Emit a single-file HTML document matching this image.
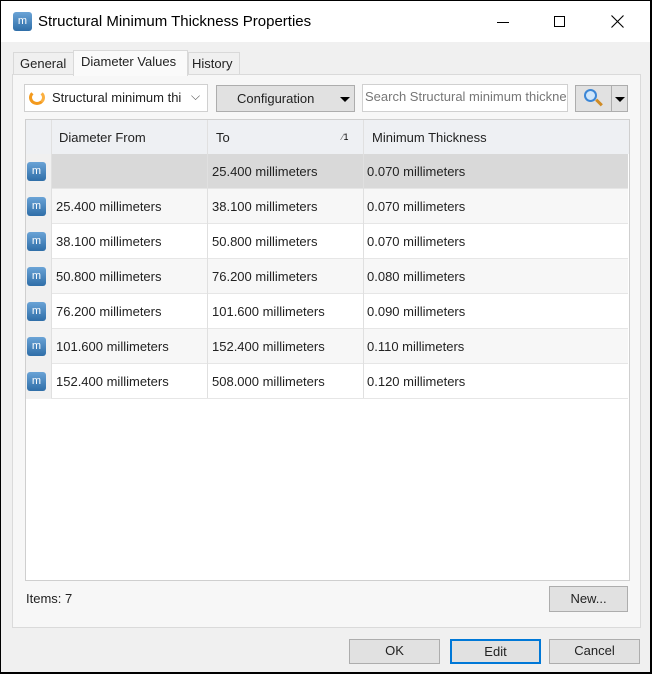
<!DOCTYPE html>
<html><head><style>
*{box-sizing:border-box;margin:0;padding:0}
body{width:652px;height:674px;background:#000;font-family:"Liberation Sans",sans-serif;font-size:13px;color:#222;position:relative;overflow:hidden}
.win{position:absolute;left:1px;top:1px;width:649px;height:671px;background:#f0f0f0}
.title{position:absolute;left:0;top:0;width:649px;height:41px;background:#fff}
.abs{position:absolute}
.mi{position:absolute;width:19px;height:19px;border-radius:3px;background:linear-gradient(#6aa3d6,#2f6ea8);color:#fff;font-size:11px;text-align:center;line-height:19px}
.btn{position:absolute;background:#e1e1e1;border:1px solid #adadad;text-align:center;font-size:13px;line-height:22px}
.row{position:absolute;left:25px;width:602px;height:35px;border-bottom:1px solid #e6e6e6}
.row span{position:absolute;top:10px}
.vl{position:absolute;top:119px;width:1px;height:278px;background:#e0e0e0}
</style></head><body>
<div class="win">
<div class="title">
 <div class="mi" style="left:12px;top:11px">m</div>
 <div class="abs" style="left:37px;top:12px;font-size:15px;color:#000">Structural Minimum Thickness Properties</div>
 <div class="abs" style="left:496px;top:21px;width:12px;height:1px;background:#000"></div>
 <div class="abs" style="left:553px;top:15px;width:11px;height:11px;border:1px solid #000"></div>
 <svg class="abs" style="left:610px;top:14px" width="13" height="13"><path d="M0.5 0.5L12.5 12.5M12.5 0.5L0.5 12.5" stroke="#000" stroke-width="1.1"/></svg>
</div>
<!-- tabs -->
<div class="abs" style="left:12px;top:51px;width:61px;height:22px;background:#f0f0f0;border:1px solid #d9d9d9;border-bottom:none"></div>
<div class="abs" style="left:19px;top:55px">General</div>
<div class="abs" style="left:72px;top:49px;width:115px;height:26px;background:#fafafa;border:1px solid #d9d9d9;border-bottom:none;z-index:2"></div>
<div class="abs" style="left:80px;top:53px;z-index:3">Diameter Values</div>
<div class="abs" style="left:187px;top:51px;width:52px;height:22px;background:#f0f0f0;border:1px solid #d9d9d9;border-bottom:none"></div>
<div class="abs" style="left:191px;top:55px">History</div>
<div class="abs" style="left:11px;top:73px;width:629px;height:554px;background:#f7f7f7;border:1px solid #dadada"></div>
<!-- toolbar -->
<div class="abs" style="left:23px;top:83px;width:184px;height:28px;background:#fff;border:1px solid #d0d0d0"></div>
<div class="abs" style="left:28px;top:89px;width:16px;height:15px;border:3px solid #f39a1d;border-radius:50%;border-right-color:#fbb040;border-top-color:transparent"></div>
<div class="abs" style="left:51px;top:89px">Structural minimum thi</div>
<div class="abs" style="left:190px;top:88px;font-size:12px;color:#555">⌵</div>
<div class="btn" style="left:215px;top:84px;width:139px;height:27px;line-height:25px;text-align:left;padding-left:20px">Configuration</div>
<div class="abs" style="left:339px;top:96px;width:0;height:0;border-left:5px solid transparent;border-right:5px solid transparent;border-top:5px solid #000"></div>
<div class="abs" style="left:361px;top:83px;width:206px;height:28px;background:#fff;border:1px solid #d0d0d0;color:#777;padding:4px 0 0 2px;overflow:hidden;white-space:nowrap">Search Structural minimum thickne</div>
<div class="btn" style="left:574px;top:84px;width:37px;height:27px"></div>
<div class="abs" style="left:583px;top:88px;width:13px;height:13px;border:2px solid #3b86d6;border-radius:50%;background:#cfe6fb"></div>
<div class="abs" style="left:594px;top:100px;width:8px;height:3px;background:#d08b25;transform:rotate(45deg)"></div>
<div class="btn" style="left:610px;top:84px;width:17px;height:27px"></div>
<div class="abs" style="left:614px;top:96px;border-left:5px solid transparent;border-right:5px solid transparent;border-top:5px solid #000"></div>
<!-- table -->
<div class="abs" style="left:24px;top:118px;width:605px;height:462px;background:#fff;border:1px solid #cfcfcf"></div>
<div class="abs" style="left:25px;top:119px;width:603px;height:34px;background:#eef0f3"></div>
<div class="abs" style="left:50px;top:119px;width:1px;height:34px;background:#bbb"></div>
<div class="abs" style="left:206px;top:119px;width:1px;height:34px;background:#bbb"></div>
<div class="abs" style="left:362px;top:119px;width:1px;height:34px;background:#bbb"></div>
<div class="abs" style="left:58px;top:129px">Diameter From</div>
<div class="abs" style="left:215px;top:129px">To</div>
<div class="abs" style="left:341px;top:131px;font-size:9px;color:#666">⁄<span style="color:#000">1</span></div>
<div class="abs" style="left:371px;top:129px">Minimum Thickness</div>

<div class="row" style="top:153px;background:#d9d9d9"><span style="left:186px">25.400 millimeters</span><span style="left:341px">0.070 millimeters</span></div>
<div class="row" style="top:188px;background:#f7f7f7"><span style="left:30px">25.400 millimeters</span><span style="left:186px">38.100 millimeters</span><span style="left:341px">0.070 millimeters</span></div>
<div class="row" style="top:223px;background:#fff"><span style="left:30px">38.100 millimeters</span><span style="left:186px">50.800 millimeters</span><span style="left:341px">0.070 millimeters</span></div>
<div class="row" style="top:258px;background:#f7f7f7"><span style="left:30px">50.800 millimeters</span><span style="left:186px">76.200 millimeters</span><span style="left:341px">0.080 millimeters</span></div>
<div class="row" style="top:293px;background:#fff"><span style="left:30px">76.200 millimeters</span><span style="left:186px">101.600 millimeters</span><span style="left:341px">0.090 millimeters</span></div>
<div class="row" style="top:328px;background:#f7f7f7"><span style="left:30px">101.600 millimeters</span><span style="left:186px">152.400 millimeters</span><span style="left:341px">0.110 millimeters</span></div>
<div class="row" style="top:363px;background:#fff"><span style="left:30px">152.400 millimeters</span><span style="left:186px">508.000 millimeters</span><span style="left:341px">0.120 millimeters</span></div>
<div class="abs" style="left:25px;top:153px;width:25px;height:245px;background:#f0f0f0"></div>
<div class="vl" style="left:50px"></div><div class="vl" style="left:206px"></div><div class="vl" style="left:362px"></div>
<div class="mi" style="left:26px;top:161px">m</div>
<div class="mi" style="left:26px;top:196px">m</div>
<div class="mi" style="left:26px;top:231px">m</div>
<div class="mi" style="left:26px;top:266px">m</div>
<div class="mi" style="left:26px;top:301px">m</div>
<div class="mi" style="left:26px;top:336px">m</div>
<div class="mi" style="left:26px;top:371px">m</div>

<div class="abs" style="left:25px;top:590px">Items: 7</div>
<div class="btn" style="left:548px;top:585px;width:79px;height:26px;line-height:24px">New...</div>
<div class="btn" style="left:348px;top:638px;width:91px;height:25px">OK</div>
<div class="btn" style="left:449px;top:638px;width:91px;height:25px;border:2px solid #0078d7;line-height:21px">Edit</div>
<div class="btn" style="left:548px;top:638px;width:91px;height:25px">Cancel</div>
</div>
</body></html>
